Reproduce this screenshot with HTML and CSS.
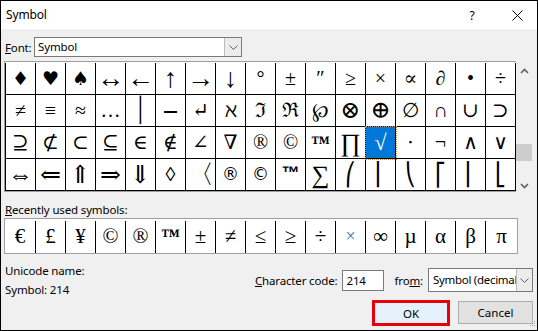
FILE: index.html
```html
<!DOCTYPE html>
<html>
<head>
<meta charset="utf-8">
<link rel="stylesheet" href="styles.css">
</head>
<body>
<div class="dialog">
  <div class="titlebar">
    <span class="title">Symbol</span>
    <span class="help">?</span>
    <span class="close"><svg width="11" height="11" viewBox="0 0 11 11"><path d="M0.5 0.5 L10.5 10.5 M10.5 0.5 L0.5 10.5" stroke="#000" stroke-width="1" fill="none"/></svg></span>
  </div>
  <div class="body">
    <div class="font-row">
      <span class="lbl"><u>F</u>ont:</span>
      <div class="combo font-combo">
        <span class="combo-text">Symbol</span>
        <span class="combo-btn"><svg width="9" height="5" viewBox="0 0 9 5"><path d="M0.5 0.5 L4.5 4.5 L8.5 0.5" stroke="#606060" fill="none"/></svg></span>
      </div>
    </div>

    <div class="grid-box">
      <div class="grid-frame">
        <div class="grid">
          <span class="cell suit">♦</span><span class="cell suit">♥</span><span class="cell suit">♠</span><span class="cell arr">↔</span><span class="cell arr">←</span><span class="cell arr">↑</span><span class="cell arr">→</span><span class="cell arr">↓</span><span class="cell">°</span><span class="cell">±</span><span class="cell">″</span><span class="cell">≥</span><span class="cell">×</span><span class="cell">∝</span><span class="cell">∂</span><span class="cell">•</span><span class="cell">÷</span>
          <span class="cell">≠</span><span class="cell">≡</span><span class="cell">≈</span><span class="cell">…</span><span class="cell ext">⏐</span><span class="cell ext">⎯</span><span class="cell">↵</span><span class="cell">ℵ</span><span class="cell">ℑ</span><span class="cell">ℜ</span><span class="cell">℘</span><span class="cell circ">⊗</span><span class="cell circ">⊕</span><span class="cell">∅</span><span class="cell">∩</span><span class="cell">∪</span><span class="cell">⊃</span>
          <span class="cell">⊇</span><span class="cell">⊄</span><span class="cell">⊂</span><span class="cell">⊆</span><span class="cell">∈</span><span class="cell">∉</span><span class="cell">∠</span><span class="cell">∇</span><span class="cell">®</span><span class="cell">©</span><span class="cell tm">™</span><span class="cell big">∏</span><span class="cell sel">√</span><span class="cell">⋅</span><span class="cell">¬</span><span class="cell">∧</span><span class="cell">∨</span>
          <span class="cell darr">⇔</span><span class="cell darr">⇐</span><span class="cell darr">⇑</span><span class="cell darr">⇒</span><span class="cell darr">⇓</span><span class="cell">◊</span><span class="cell angle">〈</span><span class="cell sans">®</span><span class="cell sans">©</span><span class="cell sans tm2">™</span><span class="cell big">∑</span><span class="cell br">⎛</span><span class="cell br">⎜</span><span class="cell br">⎝</span><span class="cell br">⎡</span><span class="cell br">⎢</span><span class="cell br">⎣</span>
        </div>
      </div>
      <div class="scrollbar">
        <svg class="arrow-up" width="9" height="6" viewBox="0 0 9 6"><path d="M1 5 L4.5 1.5 L8 5" stroke="#606060" stroke-width="1.6" fill="none"/></svg>
        <div class="thumb"></div>
        <svg class="arrow-down" width="9" height="6" viewBox="0 0 9 6"><path d="M1 1 L4.5 4.5 L8 1" stroke="#606060" stroke-width="1.6" fill="none"/></svg>
      </div>
    </div>

    <div class="recent-label"><u>R</u>ecently used symbols:</div>
    <div class="recent">
      <span class="rcell">€</span><span class="rcell">£</span><span class="rcell">¥</span><span class="rcell">©</span><span class="rcell">®</span><span class="rcell tm">™</span><span class="rcell">±</span><span class="rcell">≠</span><span class="rcell">≤</span><span class="rcell">≥</span><span class="rcell">÷</span><span class="rcell light">×</span><span class="rcell">∞</span><span class="rcell">µ</span><span class="rcell">α</span><span class="rcell">β</span><span class="rcell">π</span>
    </div>

    <div class="bottom">
      <div class="info">
        <div>Unicode name:</div>
        <div>Symbol: 214</div>
      </div>
      <div class="actions">
        <div class="code-row">
          <span class="lbl"><u>C</u>haracter code:</span>
          <div class="input">214</div>
          <span class="lbl from-lbl">fro<u>m</u>:</span>
          <div class="combo from-combo">
            <span class="combo-text">Symbol (decimal)</span>
            <span class="combo-btn"><svg width="9" height="5" viewBox="0 0 9 5"><path d="M0.5 0.5 L4.5 4.5 L8.5 0.5" stroke="#606060" fill="none"/></svg></span>
          </div>
        </div>
        <div class="buttons">
          <button class="btn ok">OK</button>
          <button class="btn cancel">Cancel</button>
        </div>
      </div>
    </div>
  </div>
  <svg class="grip" width="10" height="10" viewBox="0 0 10 10">
    <rect x="8" y="2" width="1" height="1" fill="#999"/>
    <rect x="6" y="4" width="1" height="1" fill="#999"/><rect x="8" y="4" width="1" height="1" fill="#999"/>
    <rect x="4" y="6" width="1" height="1" fill="#999"/><rect x="6" y="6" width="1" height="1" fill="#999"/><rect x="8" y="6" width="1" height="1" fill="#999"/>
  </svg>
</div>
</body>
</html>
```

FILE: styles.css
```css
* { box-sizing: border-box; }
html, body { margin: 0; padding: 0; background: #fff; }
body { font-family: "Noto Sans", "Open Sans", sans-serif; font-size: 11.5px; letter-spacing: -0.15px; color: #000; }

.dialog {
  position: relative;
  width: 538px;
  height: 331px;
  border: 1px solid #000;
  background: #f0f0f0;
  overflow: hidden;
}

.titlebar {
  height: 28px;
  background: #fff;
  display: flex;
  align-items: center;
  padding-left: 5px;
}
.title { font-size: 12px; margin-top: -1px; }
.help { margin-left: auto; width: 20px; text-align: center; font-size: 12px; margin-right: 20px; }
.close { width: 30px; display: flex; justify-content: center; margin-right: 5px; }

.body { padding: 0 4px 0 3px; }

.font-row { display: flex; align-items: center; margin-top: 8px; height: 20px; }
.font-row .lbl { width: 30px; padding-left: 1px; }
.combo {
  display: flex;
  background: #fff;
  border: 1px solid #7a7a7a;
  height: 20px;
}
.combo-text { flex: 1; padding-left: 3px; line-height: 18px; white-space: nowrap; overflow: hidden; }
.combo-btn {
  width: 17px;
  flex: none;
  background: #ececec;
  border-left: 1px solid #bcbcbc;
  display: flex;
  align-items: center;
  justify-content: center;
}
.font-combo { width: 208px; }

.grid-box { display: flex; margin-top: 4px; }
.grid-frame {
  border: 1px solid #a0a0a0;
  border-right: none;
  padding-top: 1px;
  background: #fff;
}
.grid {
  display: grid;
  grid-template-columns: repeat(17, 30px);
  border-left: 1px solid #000;
}
.cell {
  height: 32px;
  border-right: 1px solid #000;
  border-bottom: 1px solid #000;
  font-family: "Liberation Serif", "DejaVu Serif", serif;
  font-size: 20px;
  line-height: 31px;
  letter-spacing: 0;
  text-align: center;
}
.cell.suit { font-family: "DejaVu Sans", sans-serif; font-size: 19px; }
.cell.arr { font-family: "Liberation Serif", serif; font-size: 27px; line-height: 30px; }
.cell.darr { font-family: "Liberation Serif", "DejaVu Serif", serif; font-size: 25px; line-height: 31px; }
.cell.ext { font-family: "DejaVu Sans", sans-serif; font-size: 26px; line-height: 31px; }
.cell.circ { font-size: 24px; line-height: 31px; }
.cell.angle { font-family: "DejaVu Sans", sans-serif; font-size: 26px; line-height: 31px; }
.cell.tm { font-weight: bold; font-size: 19px; }
.cell.big { font-size: 25px; }
.cell.sans { font-family: "DejaVu Sans", sans-serif; font-size: 17px; }
.cell.tm2 { font-family: "Liberation Sans", sans-serif; font-weight: bold; font-size: 18px; line-height: 28px; }
.cell.br { font-family: "DejaVu Sans", sans-serif; font-size: 22px; }
.cell.sel {
  background: #0078d7;
  color: #fff;
  outline: 1px dotted #f08a24;
  position: relative;
  font-size: 22px;
}

.scrollbar {
  width: 17px;
  height: 131px;
  display: flex;
  flex-direction: column;
  align-items: center;
}
.arrow-up { margin-top: 7px; }
.thumb { width: 16px; height: 17px; background: #cdcdcd; margin-top: 70px; align-self: flex-start; }
.arrow-down { margin-top: 22px; }

.recent-label { margin-top: 10px; line-height: 16px; padding-left: 1px; }
.recent {
  display: flex;
  width: 514px;
  border: 1px solid #a0a0a0;
  background: #fff;
  padding-top: 2px;
}
.rcell {
  width: 30px;
  height: 32px;
  border-left: 1px solid #000;
  font-family: "Liberation Serif", "DejaVu Serif", serif;
  font-size: 21px;
  line-height: 30px;
  letter-spacing: 0;
  text-align: center;
}
.rcell:first-child { border-left: none; }
.rcell:last-child { width: 32px; }
.rcell.tm { font-weight: bold; font-size: 19px; }
.rcell.light { color: #3a6fb0; font-size: 18px; }

.bottom { display: flex; }
.info { margin-top: 7px; line-height: 19px; padding-left: 1px; }
.actions { margin-left: auto; display: flex; flex-direction: column; align-items: flex-end; }
.code-row { display: flex; align-items: center; margin-top: 14px; height: 24px; }
.input {
  width: 42px;
  height: 21px;
  border: 1px solid #7a7a7a;
  background: #fff;
  margin-left: 5px;
  padding-left: 3px;
  line-height: 19px;
}
.from-lbl { margin-left: 10px; }
.from-combo { width: 105px; height: 24px; margin-left: 5px; }
.from-combo .combo-text { line-height: 22px; padding-left: 4px; letter-spacing: -0.3px; }
.from-combo .combo-btn { width: 16px; }

.buttons { display: flex; margin-top: 8px; }
.btn {
  font-family: "Noto Sans", "Open Sans", sans-serif;
  font-size: 11.5px;
  color: #000;
  padding: 0;
}
.ok {
  width: 78px;
  height: 26px;
  border: 3px solid #e8000b;
  background: #e5f1fb;
}
.cancel {
  width: 75px;
  height: 23px;
  margin-left: 8px;
  margin-top: 1px;
  border: 1px solid #adadad;
  background: #e1e1e1;
}

.grip { position: absolute; right: 1px; bottom: 1px; }
```
